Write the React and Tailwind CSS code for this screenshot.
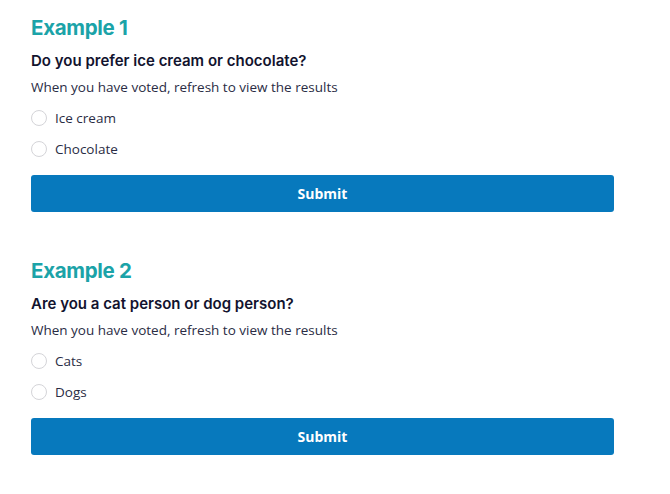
import React from "react";

function Poll({ title, question, options, first }) {
  return (
    <section className={first ? "" : "mt-[45px]"}>
      <h2 className="text-[20.5px] leading-[28px] font-bold text-[#1ba3a8] font-['Inter',sans-serif] tracking-[-0.3px]">
        {title}
      </h2>
      <p className="mt-[7px] text-[15px] leading-[24px] font-semibold text-[#12132e] font-['Inter',sans-serif]">
        {question}
      </p>
      <p className="mt-[2px] text-[13.5px] leading-[24px] text-[#2a2c44] font-['Open_Sans',sans-serif]">
        When you have voted, refresh to view the results
      </p>
      <div className="mt-[7px] flex flex-col gap-[7px]">
        {options.map((o) => (
          <label key={o} className="flex items-center gap-[8px] h-[24px]">
            <span className="w-[16px] h-[16px] rounded-full border border-[#d4d4d8] bg-white" />
            <span className="text-[13.5px] text-[#2a2c44] font-['Open_Sans',sans-serif]">{o}</span>
          </label>
        ))}
      </div>
      <button className="mt-[14px] w-full h-[37px] rounded-[3px] bg-[#0779bd] text-white text-[14px] font-bold font-['Open_Sans',sans-serif]">
        Submit
      </button>
    </section>
  );
}

export default function App() {
  return (
    <div className="w-[670px] h-[494px] bg-white px-[31px] pr-[56px] pt-[14px]">
      <Poll
        first
        title="Example 1"
        question="Do you prefer ice cream or chocolate?"
        options={["Ice cream", "Chocolate"]}
      />
      <Poll
        title="Example 2"
        question="Are you a cat person or dog person?"
        options={["Cats", "Dogs"]}
      />
    </div>
  );
}
